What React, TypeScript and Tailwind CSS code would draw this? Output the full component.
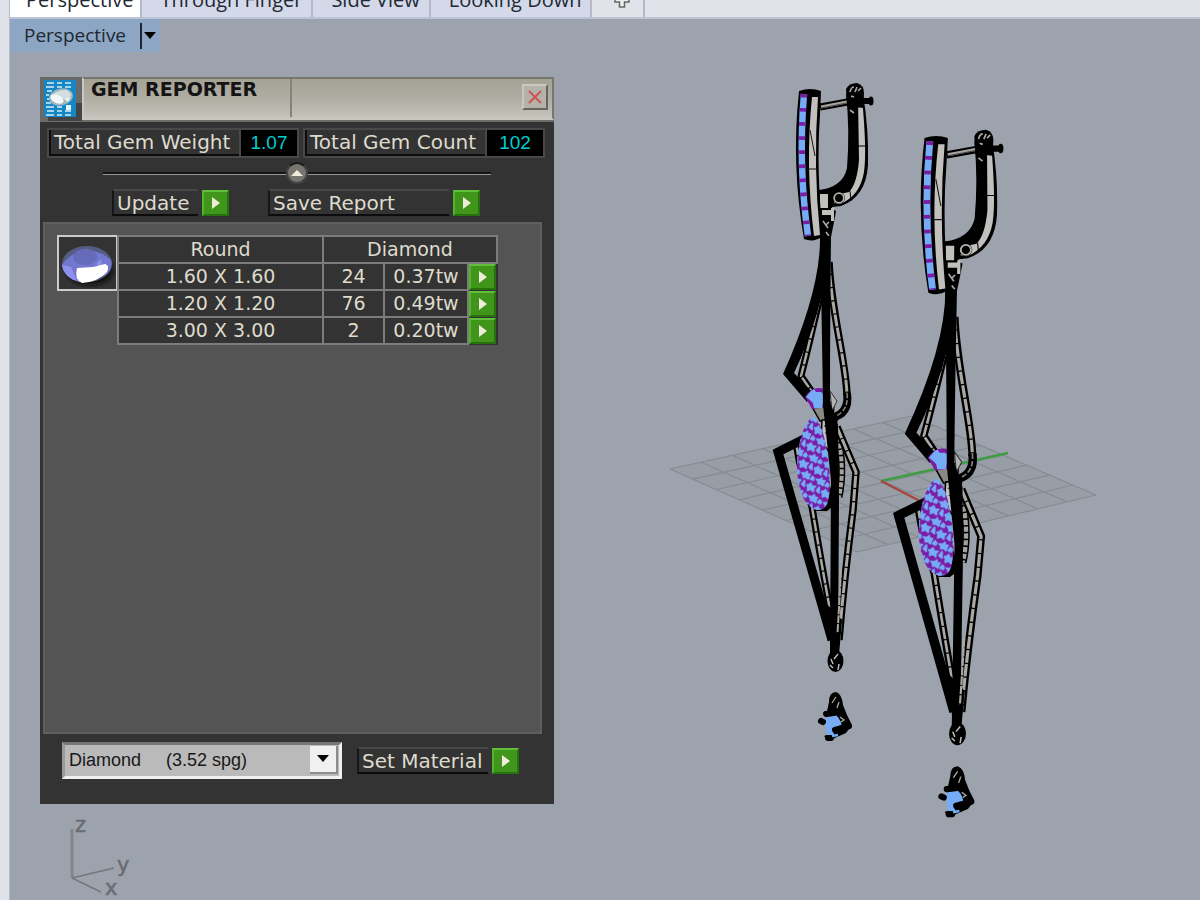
import { useState } from "react";
import clsx from "clsx";

const tabs = ["Perspective", "Through Finger", "Side View", "Looking Down"];

const rows = [
  { size: "1.60 X 1.60", count: 24, weight: "0.37tw" },
  { size: "1.20 X 1.20", count: 76, weight: "0.49tw" },
  { size: "3.00 X 3.00", count: 2, weight: "0.20tw" },
];

const materials = [
  { name: "Diamond", spg: "3.52" },
  { name: "Ruby", spg: "4.00" },
  { name: "Emerald", spg: "2.72" },
];

// corners of the construction plane: left, top, right, bottom
const plane = { l: [670, 469], t: [912, 416], r: [1096, 495], b: [857, 552] };
const CELLS = 8;

// unit square -> plane, with perspective
function project(u: number, v: number) {
  const [x0, y0] = plane.l;
  const [x1, y1] = plane.t;
  const [x2, y2] = plane.r;
  const [x3, y3] = plane.b;
  const dx1 = x1 - x2;
  const dx2 = x3 - x2;
  const dy1 = y1 - y2;
  const dy2 = y3 - y2;
  const sx = x0 - x1 + x2 - x3;
  const sy = y0 - y1 + y2 - y3;
  const det = dx1 * dy2 - dx2 * dy1;
  const g = (sx * dy2 - dx2 * sy) / det;
  const h = (dx1 * sy - sx * dy1) / det;
  const w = g * u + h * v + 1;
  return [
    ((x1 - x0 + g * x1) * u + (x3 - x0 + h * x3) * v + x0) / w,
    ((y1 - y0 + g * y1) * u + (y3 - y0 + h * y3) * v + y0) / w,
  ];
}

function segment(a: number[], b: number[]) {
  return `M${a[0].toFixed(1)} ${a[1].toFixed(1)}L${b[0].toFixed(1)} ${b[1].toFixed(1)}`;
}

function Grid() {
  const lines = Array.from({ length: CELLS + 1 }, (_, i) => i / CELLS);
  return (
    <g fill="none">
      <path d="M670 469L912 416L1096 495L857 552Z" fill="#8f959c" fillOpacity="0.35" />
      <path
        d={lines.map((t) => segment(project(t, 0), project(t, 1)) + segment(project(0, t), project(1, t))).join("")}
        stroke="#858b92"
        strokeWidth="1.2"
      />
      <path d="M881 481L1008 453" stroke="#3f9d44" strokeWidth="2.5" />
      <path d="M881 481L920 501" stroke="#a8453f" strokeWidth="2.5" />
    </g>
  );
}

// black outlined metal wire with cross ticks
function Wire({ d, w = 7.5 }: { d: string; w?: number }) {
  return (
    <g fill="none" strokeLinejoin="round">
      <path d={d} stroke="#000" strokeWidth={w} />
      <path d={d} stroke="#aaa8a3" strokeWidth={w - 4.5} strokeDasharray="12 1.2" />
    </g>
  );
}

function Earring() {
  return (
    <g>
      {/* hook */}
      <path d="M852 95L863 94Q869 130 868 165Q866 197 841 206L824 208L819 190Q843 187 847 168Q850 130 846 94Z" />
      <path d="M858 98L862 98Q867 150 864 172Q860 196 840 204L834 203L836 195L849 192Q857 184 859 160Z" fill="#c2c0bc" />
      <path d="M858 146L866 146M850 191L851 201" stroke="#000" strokeWidth="1" />
      <path d="M820 107L853 101" stroke="#000" strokeWidth="7" />
      <path d="M821 107L852 101" stroke="#a5a39f" strokeWidth="3" />
      <path d="M821 108L852 102" stroke="#333" strokeWidth="0.8" />
      <path d="M861 101L871 101" stroke="#000" strokeWidth="6" />
      <ellipse cx="871" cy="101" rx="2.5" ry="4.5" />
      <path d="M847 106L846 89Q849 83 857 83Q864 85 864 93L863 108Z" />
      <path d="M850 92Q851 87 854 87M858 91L861 88M851 96L854 97M857 87L855 92M850 110L854 113" stroke="#aaa8a3" strokeWidth="1.6" fill="none" />
      <circle cx="839" cy="198" r="6" />
      <circle cx="839" cy="198" r="4.8" fill="none" stroke="#b5b3ae" strokeWidth="1.8" />
      {/* hinge and link */}
      <path d="M819 190H832V209L836 211L834 222L831 237H822L819 222Z" />
      <path d="M820 194H828V208H820ZM822 210H831V215H822ZM831 208H834V221H831Z" fill="#c2c0bc" />
      <path d="M823 221L828 228M829 222L826 225M826 232L829 236" stroke="#aaa8a3" strokeWidth="1.6" />
      {/* front bar */}
      <path d="M799 91Q810 87 821 91L820 115Q816 170 823 236Q814 243 804 239Q791 165 799 91Z" />
      <path d="M812 97L818 97Q813 165 820 235L814 236Q805 165 812 97Z" fill="#c2c0bc" />
      <path d="M810 130L815 156M809 169H816" stroke="#111" strokeWidth="1" />
      <g fill="none" strokeWidth="6.5">
        <path d="M804 94Q798 165 808 236" stroke="#75acf5" />
        <path d="M804 94Q798 165 808 236" stroke="#7b1ba6" strokeDasharray="3.6 10.500" />
      </g>

      {/* upper frame */}
      <Wire d="M829 262C831 310 846 362 847 395" />
      <path d="M847 393Q850 414 831 418" stroke="#000" strokeWidth="8" fill="none" />
      <path d="M847 393Q849 410 836 416" stroke="#88867f" strokeWidth="1.5" strokeDasharray="5 2" fill="none" />
      <Wire d="M822 288Q809 345 801 376L812 392" w={7} />
      <path d="M820 236Q821 290 783 374L807 402L814 394L794 373Q824 310 829 250V236Z" />
      <path d="M811 405L834 402L833 422L820 421Z" fill="#8a8883" stroke="#000" strokeWidth="1.5" />
      <path d="M830 391L837 401L832 411Z" fill="#b5b3ae" stroke="#333" strokeWidth="1" />
      <path d="M805 397Q812 385 825 389L828 407L812 409Z" fill="#7b1ba6" />
      <path d="M806 397L811 391L814 389L816 392H821L827 396L826 400L823 402L822 408H814L813 403L810 400Z" fill="#75acf5" />

      {/* lower frame */}
      <path d="M822 420H837L831 455L821 440Z" fill="#c2c0bc" stroke="#000" strokeWidth="1.5" />
      <path d="M824 426H836M825 433H834" stroke="#222" strokeWidth="1" />
      <path d="M838 437Q845 470 839 497" stroke="#000" strokeWidth="7" fill="none" />
      <path d="M838 437Q845 470 839 497" stroke="#a5a39f" strokeWidth="4" strokeDasharray="5 1.5" fill="none" />
      <Wire d="M837 427L856 472L853 510Q844 580 839 640" />
      <Wire d="M796 443Q802 480 812 507Q820 555 830 610" w={7} />
      <path d="M806 438L778 452L832 640" stroke="#000" strokeWidth="9" fill="none" />
      <path d="M828 480L836 504L827 511L816 511Z" />
      <path
        d="M814 417C822 422 829 450 830 480C830 505 826 510 817 510C803 507 797 487 797 465C798 438 806 419 814 417Z"
        fill="url(#pave)"
      />
      <path d="M820 236H831Q830 330 830 402L838 425L839 500L838 655H830L831 480L823 405Q822 330 820 236Z" />
      <path d="M823 600L829 630L831 655H839L842 620Z" />
      <path d="M841 570Q839 610 837.500 633" stroke="#aaa8a3" strokeWidth="2" strokeDasharray="8 1" fill="none" />
      <ellipse cx="835.5" cy="661" rx="8" ry="11" />
      <path d="M831 659L833 664M838 654L834 659M839 664L838 670M830 665L833 668" stroke="#c2c0bc" strokeWidth="1.4" />

      {/* loose stone in its prongs */}
      <path d="M829 702Q829 692 836 692Q842 694 843 705L847 715L852 725L846 733L828 741L824 736L834 732L826 716Z" />
      <path d="M825 718L829 716L836 715Q843 722 841 728L833 731L835 737L827 735Z" fill="#75acf5" />
      <g stroke="#000" strokeLinecap="round" strokeWidth="6" fill="none">
        <path d="M821 721L823 722M826 714L834 713M835 730L849 726M828 738L831 738" />
      </g>
      <path d="M832 703L836 697M837 708L839 702M840 717L844 720L841 722" stroke="#aaa8a3" strokeWidth="1.3" fill="none" />
      <path d="M832 736L838 735" stroke="#75acf5" strokeWidth="2.5" />
    </g>
  );
}

function Scene() {
  return (
    <svg viewBox="554 52 646 848" className="block h-auto w-full" role="img" aria-label="Earrings">
      <defs>
        <pattern id="pave" width="14" height="16" patternUnits="userSpaceOnUse" patternTransform="rotate(24) scale(1.15)">
          <rect width="14" height="16" fill="#7b1ba6" />
          <g fill="#75acf5" stroke="#75acf5" strokeWidth="1.4" strokeLinejoin="round">
            <path d="M3 1L5 3L8 2L7 4L8 7L5 6L3 8L2 5L0 4L2 3Z" />
            <path d="M10 9L11 11L14 10L13 12L14 15L11 14L9 15L8 13L6 12L9 11Z" />
            <path d="M11 1L12 3L13 6L10 5Z" />
            <path d="M2 11L4 12L4 14L1 14Z" />
          </g>
        </pattern>
      </defs>
      <Grid />
      <Earring />
      <g transform="matrix(1.06 0 -0.01 1.045 78.5 43)">
        <Earring />
      </g>
    </svg>
  );
}

function Axes() {
  return (
    <svg width="80" height="84" viewBox="60 814 80 84" className="ml-5 mt-2.5 block" role="img" aria-label="World axes">
      <g stroke="#74787d" fill="none">
        <path d="M72 829V878" strokeWidth="3" stroke="#83878c" />
        <path d="M72 878L114 868" strokeWidth="1.5" />
        <path d="M72 878L101 892" strokeWidth="1.5" />
      </g>
      <g fill="#696c70" stroke="#696c70" strokeWidth="0.5" fontFamily="DejaVu Sans, sans-serif" fontSize="21">
        <text x="75" y="832">z</text>
        <text x="117" y="872">y</text>
        <text x="105" y="895">x</text>
      </g>
    </svg>
  );
}

function ReporterLogo() {
  return (
    <svg width="42" height="44" viewBox="0 0 42 44" className="block shrink-0" aria-hidden="true">
      <rect width="42" height="44" fill="#696969" />
      <path d="M36 26H42V44H8V39H36Z" fill="#444" />
      <rect x="4" y="3" width="32" height="37" fill="#1687c5" />
      <path
        d="M7 6H14M17 6H22M25 6H31M6 10H14M17 10H22M25 10H31M7 14H12M6 18H9M7 22H10M6 26H11M6 30H14M17 30H22M7 34H14M17 34H22M25 34H31M6 38H14M17 38H22M25 38H31"
        stroke="#d8eefa"
        strokeWidth="1.6"
      />
      <path d="M26 28H31V33H26Z" fill="#e6f4fb" />
      <ellipse cx="21" cy="20" rx="12" ry="8.5" fill="#9fb5bd" transform="rotate(-12 21 20)" />
      <path d="M11 20Q16 12 27 13L32 18L24 22L17 20Z" fill="#d5dfe2" />
      <ellipse cx="17" cy="22" rx="7" ry="4" fill="#f5f8f8" transform="rotate(25 17 22)" />
      <path d="M24 22L31 19L28 25Z" fill="#eef3f4" />
    </svg>
  );
}

function GemThumb() {
  return (
    <svg width="57" height="52" viewBox="0 0 57 52" className="block" role="img" aria-label="Round gem">
      <defs>
        <filter id="soft">
          <feGaussianBlur stdDeviation="2" />
        </filter>
      </defs>
      <ellipse cx="31" cy="34" rx="23" ry="14" fill="#111" filter="url(#soft)" />
      <ellipse cx="28" cy="27" rx="25" ry="18" fill="#575c82" />
      <path d="M3 28Q7 22 13 18L28 12L44 17L52 23Q54 31 47 38L20 45Q5 41 3 28Z" fill="#7277cf" />
      <ellipse cx="26" cy="20" rx="12" ry="8" fill="#656bb9" />
      <path d="M3 28L12 30L18 44Q5 40 3 28ZM37 27L42 22L43 30Z" fill="#8e91ee" />
      <path d="M18 31L34 30L46 27Q51 28 48 35Q39 45 23 46Q15 43 18 31Z" fill="#fff" />
    </svg>
  );
}

function GoIcon() {
  return (
    <span className="flex h-[26px] w-[27px] shrink-0 items-center justify-center border-2 border-t-[#62bf3c] border-l-[#55b52d] border-r-[#27710f] border-b-[#27710f] bg-[#3f961b]">
      <svg width="8" height="14" viewBox="0 0 8 14" aria-hidden="true">
        <path d="M0 1L8 7L0 13Z" fill="#f1ecd9" />
      </svg>
    </span>
  );
}

function ActionButton({ label, width }: { label: string; width: string }) {
  return (
    <button type="button" className="flex items-center gap-1 text-[20px]">
      <span
        className={clsx(
          "flex h-[27px] items-center border-2 border-r-0 border-t-[#484848] border-l-[#161616] border-b-[#0c0c0c] pl-[3px]",
          width
        )}
      >
        {label}
      </span>
      <GoIcon />
    </button>
  );
}

function Stat({ label, value }: { label: string; value: string }) {
  return (
    <dl className="flex h-[30px] border-2 border-[#484848] text-[20px] leading-6">
      <dt className="flex-1 border-b-2 border-l-2 border-[#0c0c0c] pl-[3px] whitespace-nowrap">{label}</dt>
      <dd className="w-[58px] border-l-2 border-[#484848] bg-black text-center font-['Liberation_Sans',sans-serif] text-[19px] leading-[26px] text-[#00cdd2]">
        {value}
      </dd>
    </dl>
  );
}

function ReporterPanel() {
  const [material, setMaterial] = useState("Diamond");

  return (
    <section className="w-[514px] bg-[#333] pb-[25px] font-['DejaVu_Sans',sans-serif] text-[19px] text-[#dedbcd]">
      <header className="flex h-[45px] border-b-2 border-[#6d6d67]">
        <ReporterLogo />
        <div className="flex flex-1 items-start border-2 border-t-[#77766f] border-r-[#77766f] border-b-[#c9c8c0] border-l-[#c9c8c0] bg-linear-to-b from-[#a5a295] via-[#b0ada3] to-[#c5c3bb]">
          <h1 className="h-[38px] w-[208px] border-r-2 border-[#85837a] pl-[7px] text-[19px] leading-5 font-bold whitespace-nowrap text-[#141414]">
            GEM REPORTER
          </h1>
          <button
            type="button"
            aria-label="Close"
            className="mt-[5px] mr-1 ml-auto flex h-[26px] w-[26px] items-center justify-center border-2 border-t-[#c9c8c0] border-l-[#c9c8c0] border-r-[#66655f] border-b-[#66655f] bg-[#b5b2a9]"
          >
            <svg width="14" height="14" viewBox="0 0 14 14" aria-hidden="true">
              <path d="M1 1L13 13M13 1L1 13" stroke="#cf5052" strokeWidth="1.8" />
            </svg>
          </button>
        </div>
      </header>

      <div className="mt-1.5 grid grid-cols-[252px_1fr] gap-1 pr-[9px] pl-[7px]">
        <Stat label="Total Gem Weight" value="1.07" />
        <Stat label="Total Gem Count" value="102" />
      </div>

      <div className="mt-1 mr-[63px] ml-[63px] flex items-center">
        <span className="h-[3px] flex-1 border-t-2 border-b border-t-[#141414] border-b-[#999]" />
        <button
          type="button"
          aria-label="Collapse"
          className="flex h-[22px] w-[22px] items-center justify-center rounded-full border-2 border-t-[#1c1c1c] border-[#444] bg-[#777570]"
        >
          <svg width="12" height="8" viewBox="0 0 12 8" aria-hidden="true">
            <path d="M0 7L6 1L12 7Z" fill="#f1ecd9" />
          </svg>
        </button>
        <span className="h-[3px] flex-1 border-t-2 border-b border-t-[#141414] border-b-[#999]" />
      </div>

      <div className="mt-[5px] flex gap-[39px] pl-[72px]">
        <ActionButton label="Update" width="w-[86px]" />
        <ActionButton label="Save Report" width="w-[181px]" />
      </div>

      <div className="mt-1.5 mr-3 ml-[3px] flex h-[512px] items-start border-2 border-[#5f5f5f] bg-[#545454] pt-[11px] pl-3">
        <div className="border-2 border-[#cbcbcb] bg-[#333]">
          <GemThumb />
        </div>
        <table className="-ml-px w-[379px] table-fixed border-collapse bg-[#333] text-center leading-6">
          <colgroup>
            <col className="w-[205px]" />
            <col className="w-[61px]" />
            <col className="w-[84px]" />
            <col className="w-[29px]" />
          </colgroup>
          <thead>
            <tr>
              <th className="border-2 border-[#7c7c7c] p-0 pb-px font-normal" scope="col">Round</th>
              <th className="border-2 border-[#7c7c7c] p-0 pb-px font-normal" scope="col" colSpan={3}>Diamond</th>
            </tr>
          </thead>
          <tbody>
            {rows.map((row) => (
              <tr key={row.size}>
                <td className="border-2 border-[#7c7c7c] p-0 pb-px">{row.size}</td>
                <td className="border-2 border-[#7c7c7c] p-0 pb-px">{row.count}</td>
                <td className="border-2 border-[#7c7c7c] p-0 pb-px">{row.weight}</td>
                <td className="p-0">
                  <button type="button" aria-label={`Show ${row.size}`} className="block">
                    <GoIcon />
                  </button>
                </td>
              </tr>
            ))}
          </tbody>
        </table>
      </div>

      <div className="mt-2 flex items-center gap-[15px] pl-[22px]">
        <div className="relative">
          <select
            aria-label="Material"
            value={material}
            onChange={(e) => setMaterial(e.target.value)}
            className="block h-[37px] w-[280px] appearance-none border-[3px] border-t-[#777] border-l-[#999] border-r-[#f0f0f0] border-b-[#f0f0f0] bg-[#bababa] pl-1 font-['Liberation_Sans',sans-serif] text-[18px] text-[#181818]"
          >
            {materials.map((m) => (
              <option key={m.name} value={m.name}>
                {`${m.name}\u00a0\u00a0\u00a0\u00a0\u00a0(${m.spg}\u00a0spg)`}
              </option>
            ))}
          </select>
          <span className="pointer-events-none absolute top-1 right-1 flex h-7 w-7 items-center justify-center border-r-2 border-b-2 border-[#8c8c8c] bg-[#f0f0f0]">
            <svg width="12" height="8" viewBox="0 0 12 8" aria-hidden="true">
              <path d="M0 0H12L6 7Z" />
            </svg>
          </span>
        </div>
        <ActionButton label="Set Material" width="w-[131px]" />
      </div>
    </section>
  );
}

export default function App() {
  const [active, setActive] = useState("Perspective");

  return (
    <div className="flex min-h-screen overflow-hidden bg-[#9da3ac] font-['Open_Sans',sans-serif] text-[19px] text-[#202833]">
      <div className="w-[10px] shrink-0 border-r border-[#b4bac6] bg-[#dfe2e8]" />
      <main className="min-w-0 flex-1">
        <nav className="-mt-2.5 flex h-[29px] border-b-2 border-[#bcc3d4] bg-[#e0e3ea] text-[20px] leading-5">
          {tabs.map((tab) => (
            <button
              key={tab}
              type="button"
              onClick={() => setActive(tab)}
              className={clsx(
                "flex items-start border-r-2 border-[#b3b9c9] whitespace-nowrap",
                tab === active ? "bg-white pr-[7px] pl-4" : "bg-[#d4d9e9] pr-[9px] pl-[18px]"
              )}
            >
              {tab}
            </button>
          ))}
          <button type="button" aria-label="New tab" className="flex w-[53px] items-start justify-center border-r-2 border-[#b3b9c9] pt-0.5 pl-2">
            <svg width="16" height="16" viewBox="0 0 16 16" aria-hidden="true">
              <path d="M5.500 1H10.500V5.500H15V10H10.500V15H5.500V10H1V5.500H5.500Z" fill="#eee" stroke="#666" strokeWidth="1.500" />
            </svg>
          </button>
        </nav>

        <button type="button" className="flex h-[33px] w-[150px] items-center rounded-br bg-[#8ca6c3] pl-3.5">
          Perspective
          <span className="ml-3.5 h-[26px] w-0.5 bg-[#20252c]" />
          <svg width="12" height="8" viewBox="0 0 12 8" className="ml-0.5" aria-hidden="true">
            <path d="M0 0H12L6 7Z" />
          </svg>
        </button>

        <div className="flex items-start">
          <div className="shrink-0 pt-[25px] pl-[30px]">
            <ReporterPanel />
            <Axes />
          </div>
          <div className="min-w-0 flex-1">
            <Scene />
          </div>
        </div>
      </main>
    </div>
  );
}
